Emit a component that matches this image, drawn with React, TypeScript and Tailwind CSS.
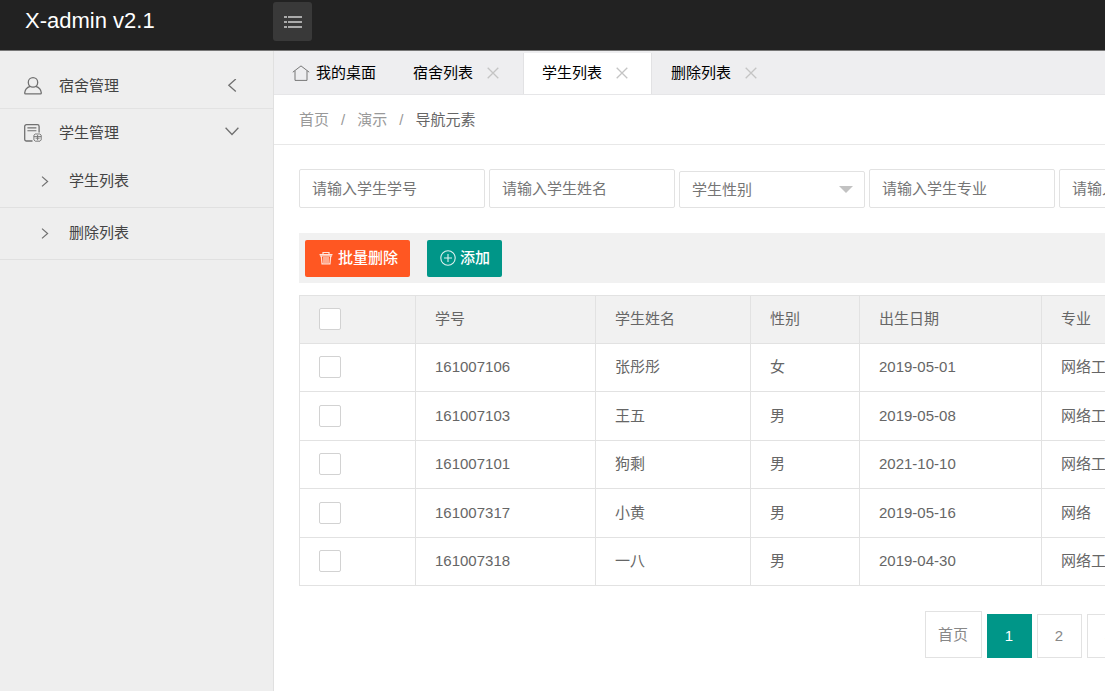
import React from "react";

type Student = { id: string; name: string; sex: string; birth: string; major: string };

const students: Student[] = [
  { id: "161007106", name: "张彤彤", sex: "女", birth: "2019-05-01", major: "网络工程" },
  { id: "161007103", name: "王五", sex: "男", birth: "2019-05-08", major: "网络工程" },
  { id: "161007101", name: "狗剩", sex: "男", birth: "2021-10-10", major: "网络工程" },
  { id: "161007317", name: "小黄", sex: "男", birth: "2019-05-16", major: "网络" },
  { id: "161007318", name: "一八", sex: "男", birth: "2019-04-30", major: "网络工程" },
];

const headings = ["学号", "学生姓名", "性别", "出生日期", "专业"];

function ListIcon() {
  return (
    <svg width="20" height="14" viewBox="0 0 20 14" fill="none" stroke="#d0d0d0" strokeWidth="1.7">
      <path d="M1 2h3M1 7h3M1 12h3M5 2h14M5 7h14M5 12h14" />
    </svg>
  );
}

function UserIcon() {
  return (
    <svg width="18" height="18" viewBox="0 0 18 18" fill="none" stroke="#707070" strokeWidth="1.3" strokeLinejoin="round">
      <circle cx="9" cy="5.4" r="4.7" />
      <path d="M6.2 9.3C3 10.3.9 12.7.7 15.9c0 .6.3.9.9.9h14.8c.6 0 .9-.3.9-.9-.2-3.2-2.3-5.6-5.5-6.6" />
    </svg>
  );
}

function FormIcon() {
  return (
    <svg width="18" height="18" viewBox="0 0 18 18" fill="none" stroke="#707070" strokeWidth="1.3" strokeLinejoin="round">
      <path d="M8.5 17H2.4A1.7 1.7 0 0 1 .7 15.300V2.400A1.700 1.700 0 0 1 2.400.7h11a1.700 1.700 0 0 1 1.700 1.700V8.500" />
      <path strokeWidth="1.1" d="M3.400 3.900h9M3.400 6.800h9" />
      <path strokeWidth="0.9" d="M9.900 11.200l1.300-1.200h4.700l1.300 1.200v4.700L16 17.200h-4.700l-1.400-1.300zM9.900 12.600h7.300M13.600 11v5.200M11.600 14.200h4" />
    </svg>
  );
}

function HomeIcon() {
  return (
    <svg width="18" height="16" viewBox="0 0 18 16" fill="none" stroke="#777" strokeWidth="1" strokeLinejoin="round">
      <path d="M.8 7.2 9 .9l8.2 6.3M3 5.8v9.6h12V5.8" />
    </svg>
  );
}

function Chevron({ direction }: { direction: "left" | "right" | "down" }) {
  if (direction === "down") {
    return (
      <svg width="14" height="14" viewBox="0 0 14 14" fill="none" stroke="#707070" strokeWidth="1.3">
        <path d="M.6 1.7 7 8.500l6.400-6.800" />
      </svg>
    );
  }
  if (direction === "left") {
    return (
      <svg width="14" height="14" viewBox="0 0 14 14" fill="none" stroke="#707070" strokeWidth="1.3">
        <path d="M10.800 0 3.800 6.200l7 6.200" />
      </svg>
    );
  }
  return (
    <svg width="8" height="11" viewBox="0 0 8 11" fill="none" stroke="#707070" strokeWidth="1.2">
      <path d="M1 .6 6.6 5.5 1 10.4" />
    </svg>
  );
}

function TrashIcon() {
  return (
    <svg width="14" height="14" viewBox="0 0 14 14" fill="none" stroke="#ffe3da" strokeWidth="1.2">
      <path d="M.5 3.600h13M4 3.200V1.500h6v1.700M1 5h12M2.300 5l.7 7.900h8L11.700 5M5 6v6M7 6v6M9 6v6" />
    </svg>
  );
}

function PlusIcon() {
  return (
    <svg width="16" height="16" viewBox="0 0 16 16" fill="none" stroke="#e0f2f0" strokeWidth="1.1">
      <circle cx="8" cy="8" r="7.2" />
      <path d="M8 4v8M4 8h8" />
    </svg>
  );
}

function SideItem({ label, icon, direction, open }: { label: string; icon: React.ReactNode; direction: "left" | "down"; open?: boolean }) {
  return (
    <button
      type="button"
      aria-expanded={!!open}
      className={
        "flex w-full items-center pr-[34px] pl-6 text-[15px] leading-6 text-[#444] " +
        (open ? "h-[47px]" : "h-[45px] border-b border-[#e2e2e2]")
      }
    >
      {icon}
      <span className="ml-[17px] flex-1 text-left">{label}</span>
      <Chevron direction={direction} />
    </button>
  );
}

function Tab({ label, active }: { label: string; active?: boolean }) {
  return (
    <li
      className={
        "flex h-full items-center gap-[14px] border-x pr-[23px] pb-0.5 pl-[18px] text-[15px] leading-6 text-black " +
        (active ? "border-[#e2e2e4] bg-white" : "border-transparent")
      }
    >
      <span>{label}</span>
      <button type="button" aria-label={"关闭" + label}>
        <svg width="12" height="12" viewBox="0 0 12 12" stroke="#c4c4c4" strokeWidth="1.3">
          <path d="M.7.7l10.6 10.6M11.3.7.7 11.3" />
        </svg>
      </button>
    </li>
  );
}

function SearchInput({ placeholder }: { placeholder: string }) {
  return (
    <input
      type="text"
      aria-label={placeholder}
      placeholder={placeholder}
      className="h-[39px] w-[186px] rounded-[2px] border border-[#e2e2e2] bg-white px-3 text-[15px] text-[#555] outline-none placeholder:text-[#757575]"
    />
  );
}

function Check({ label }: { label: string }) {
  return (
    <input
      type="checkbox"
      aria-label={label}
      className="block size-[22px] appearance-none rounded-[2px] border border-[#d2d2d2] bg-white checked:bg-[#009688]"
    />
  );
}

const cell = "border border-[#e2e2e2] px-[19px] pt-0 pb-px text-left font-normal";

export default function App() {
  return (
    <div className="flex min-h-screen flex-col overflow-hidden bg-white font-['Liberation_Sans','Noto_Sans_CJK_SC',sans-serif] text-[15px] leading-6 text-[#666]">
      <header className="flex h-[51px] shrink-0 items-start border-b border-[#777] bg-[#222]">
        <a href="#" className="w-[273px] pl-[25px] text-[22px] leading-[42px] text-white">
          X-admin v2.1
        </a>
        <button type="button" aria-label="切换菜单" className="mt-0.5 flex size-[39px] items-center justify-center rounded-[3px] bg-[#393939]">
          <ListIcon />
        </button>
      </header>

      <div className="flex flex-1">
        <nav className="w-[274px] shrink-0 border-r border-[#e0e0e0] bg-[#eee] pt-[13px]">
          <SideItem label="宿舍管理" icon={<UserIcon />} direction="left" />
          <SideItem label="学生管理" icon={<FormIcon />} direction="down" open />
          <ul className="text-[#444]">
            {["学生列表", "删除列表"].map((label) => (
              <li key={label} className="border-b border-[#e0e0e0]">
                <a href="#" className="flex h-[51px] items-center gap-5 pb-px pl-[41px]">
                  <Chevron direction="right" />
                  {label}
                </a>
              </li>
            ))}
          </ul>
        </nav>

        <main className="min-w-0 flex-1 overflow-hidden">
          <ul className="flex h-11 items-stretch border-b border-[#e6e6e8] bg-[#eeeef0] pt-0.5">
            <li className="flex items-center gap-[6px] px-[18px] pb-0.5 text-black">
              <HomeIcon />
              我的桌面
            </li>
            <Tab label="宿舍列表" />
            <Tab label="学生列表" active />
            <Tab label="删除列表" />
          </ul>

          <div className="flex h-[50px] items-center gap-3 border-b border-[#e8e8e8] px-[25px] text-[#999]">
            <a href="#">首页</a>
            <span>/</span>
            <a href="#">演示</a>
            <span>/</span>
            <span className="text-[#666]">导航元素</span>
          </div>

          <div className="w-[1570px] px-[25px] pt-6">
            <form className="flex items-end gap-1">
              <SearchInput placeholder="请输入学生学号" />
              <SearchInput placeholder="请输入学生姓名" />
              <div className="relative">
                <select
                  aria-label="学生性别"
                  defaultValue=""
                  className="block h-[37px] w-[186px] appearance-none rounded-[2px] border border-[#e2e2e2] bg-white px-3 text-[15px] text-[#757575] outline-none"
                >
                  <option value="">学生性别</option>
                  <option>男</option>
                  <option>女</option>
                </select>
                <svg className="pointer-events-none absolute top-[15px] right-3" width="14" height="7" viewBox="0 0 14 7" fill="#c2c2c2">
                  <path d="M0 0h14L7 7z" />
                </svg>
              </div>
              <SearchInput placeholder="请输入学生专业" />
              <SearchInput placeholder="请输入学生宿舍" />
            </form>

            <div className="mt-[25px] flex h-[50px] items-center gap-[17px] bg-[#f1f1f1] px-[6px]">
              <button type="button" className="flex h-[37px] items-center gap-[5px] rounded-[2px] bg-[#ff5722] pr-3 pl-[14px] font-medium text-white">
                <TrashIcon />
                批量删除
              </button>
              <button type="button" className="flex h-[37px] items-center gap-1 rounded-[2px] bg-[#009688] pr-3 pl-[13px] font-medium text-white">
                <PlusIcon />
                添加
              </button>
            </div>

            <table className="mt-3 w-full table-fixed border-collapse">
              <colgroup>
                <col className="w-[116px]" />
                <col className="w-[180px]" />
                <col className="w-[155px]" />
                <col className="w-[109px]" />
                <col className="w-[182px]" />
                <col />
              </colgroup>
              <thead>
                <tr className="h-12 bg-[#f1f1f1]">
                  <th className={cell}>
                    <Check label="全选" />
                  </th>
                  {headings.map((h) => (
                    <th key={h} className={cell}>
                      {h}
                    </th>
                  ))}
                </tr>
              </thead>
              <tbody>
                {students.map((s) => (
                  <tr key={s.id} className="odd:h-12 even:h-[49px]">
                    <td className={cell}>
                      <Check label={s.name} />
                    </td>
                    <td className={cell}>{s.id}</td>
                    <td className={cell}>{s.name}</td>
                    <td className={cell}>{s.sex}</td>
                    <td className={cell}>{s.birth}</td>
                    <td className={cell}>{s.major}</td>
                  </tr>
                ))}
              </tbody>
            </table>

            <div className="mt-[25px] flex items-end justify-center gap-[5px] text-[#888]">
              <a href="#" className="flex h-[47px] w-[57px] items-center justify-center border border-[#e2e2e2]">
                首页
              </a>
              <span className="flex h-11 w-[45px] items-center justify-center bg-[#009688] text-white">1</span>
              <a href="#" className="flex h-11 w-[45px] items-center justify-center border border-[#e2e2e2]">
                2
              </a>
              <a href="#" className="flex h-11 w-[45px] items-center justify-center border border-[#e2e2e2]">
                3
              </a>
              <a href="#" className="flex h-[47px] w-[57px] items-center justify-center border border-[#e2e2e2]">
                末页
              </a>
            </div>
          </div>
        </main>
      </div>
    </div>
  );
}
